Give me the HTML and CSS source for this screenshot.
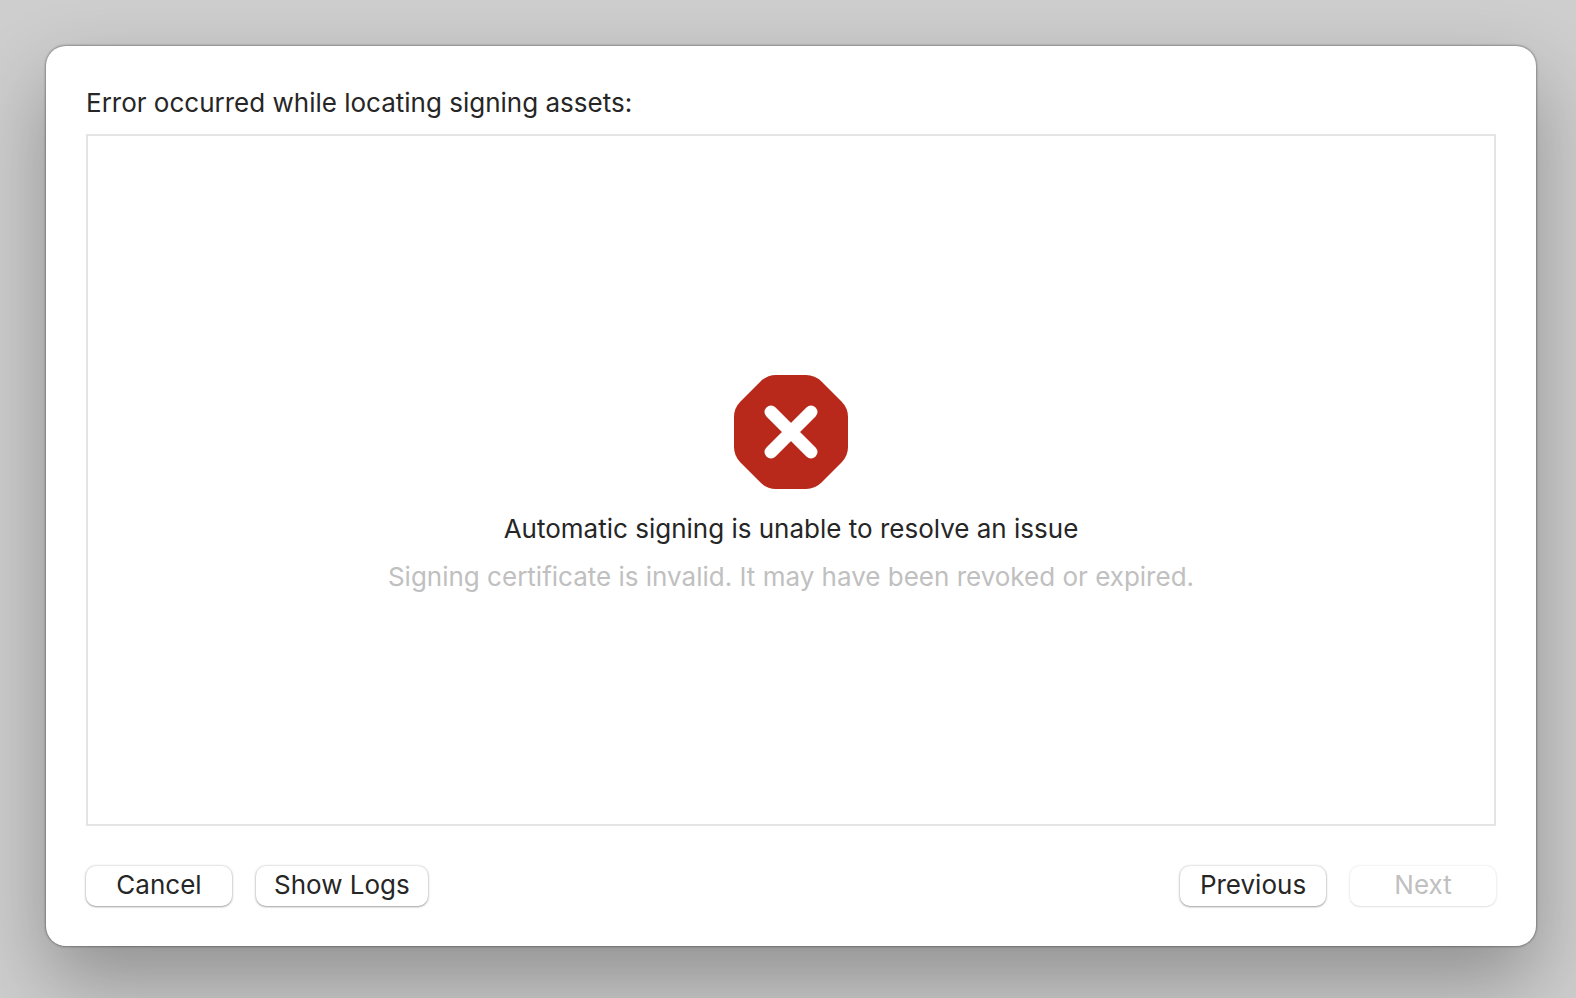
FILE: index.html
```html
<!DOCTYPE html>
<html lang="en">
  <head>
    <meta charset="UTF-8" />
    <meta name="viewport" content="width=device-width, initial-scale=1.0" />
    <title>Signing Assets</title>
    <link rel="stylesheet" href="styles.css">
  </head>
  <body>
    <main class="dialog">
      <h1 class="dialog-title">Error occurred while locating signing assets:</h1>

      <section class="message-box">
        <svg class="error-icon" viewBox="0 0 114 114" aria-hidden="true">
          <path class="octagon" d="M42 0H72Q81 0 87.500 6.500L107.500 26.500Q114 33 114 42V72Q114 81 107.500 87.500L87.500 107.500Q81 114 72 114H42Q33 114 26.500 107.500L6.500 87.500Q0 81 0 72V42Q0 33 6.500 26.500L26.500 6.500Q33 0 42 0Z" />
          <path class="cross" d="M37 37L77 77M77 37L37 77" />
        </svg>
        <p class="message">Automatic signing is unable to resolve an issue</p>
        <p class="detail">Signing certificate is invalid. It may have been revoked or expired.</p>
      </section>

      <div class="buttons">
        <button class="button" type="button">Cancel</button>
        <button class="button" type="button">Show Logs</button>
        <button class="button previous" type="button">Previous</button>
        <button class="button" type="button" disabled>Next</button>
      </div>
    </main>
  </body>
</html>
```
FILE: styles.css
```css
* {
  box-sizing: border-box;
}
body {
  display: flex;
  min-height: 100vh;
  margin: 0;
  padding: 46px 40px 52px 46px;
  background-color: #cecece;
  color: #262626;
  font-family: Inter, sans-serif;
  font-size: 26px;
  line-height: 32px;
}
.dialog {
  display: flex;
  flex: 1;
  flex-direction: column;
  padding: 41px 40px 40px;
  background-color: #fff;
  border-radius: 20px;
  box-shadow: 0 0 2px 1px rgba(0, 0, 0, 0.3), 0 36px 80px rgba(0, 0, 0, 0.3);
}
.dialog-title {
  margin: 0 0 15px;
  font-size: 26px;
  font-weight: 400;
}
.message-box {
  display: flex;
  flex: 1;
  flex-direction: column;
  align-items: center;
  justify-content: center;
  padding-top: 8px;
  border: 2px solid #e4e4e4;
  text-align: center;
}
.error-icon {
  width: 114px;
  height: 114px;
  margin-bottom: 24px;
}
.octagon {
  fill: #b8291b;
}
.cross {
  fill: none;
  stroke: #fff;
  stroke-width: 13;
  stroke-linecap: round;
}
.message {
  margin: 0 0 16px;
}
.detail {
  margin: 0;
  color: #c0c0c0;
}
.buttons {
  display: flex;
  gap: 24px;
  margin-top: 40px;
}
.button {
  min-width: 146px;
  height: 40px;
  padding: 0 18px 2px;
  background-color: #fff;
  border: none;
  border-radius: 10px;
  box-shadow: 0 0 2px 1px rgba(0, 0, 0, 0.1), 0 1px 2px rgba(0, 0, 0, 0.3);
  color: #262626;
  font: inherit;
}
.button:disabled {
  box-shadow: 0 0 2px 1px rgba(0, 0, 0, 0.05), 0 1px 2px rgba(0, 0, 0, 0.08);
  color: #c0c0c0;
}
.previous {
  margin-left: auto;
}
```
